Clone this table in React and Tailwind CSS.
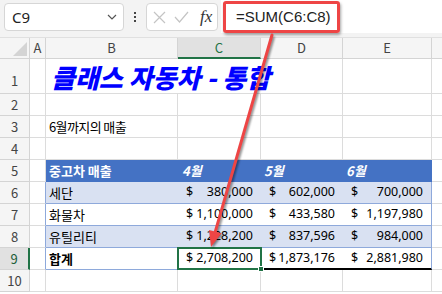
import React from "react";

const grid = "border-r border-b border-[#dcdcdc]";

const RowHead = ({ n, h, active }) => (
  <div
    className={`w-[30px] shrink-0 flex items-center justify-center text-[13px] ${h} ${
      active
        ? "bg-[#e1e1e1] text-[#1e5e3a] border-r-2 border-r-[#217346] border-b border-b-[#d4d4d4]"
        : "bg-[#f5f5f5] text-[#444] border-r border-b border-[#d4d4d4]"
    }`}
  >
    {n}
  </div>
);

const Money = ({ value, className }) => (
  <div className={`flex items-center justify-between px-[8px] text-[12.5px] font-['Noto_Sans',sans-serif] ${className}`}>
    <span>$</span>
    <span>{value}</span>
  </div>
);

const data = [
  { n: 6, label: "세단", c: "380,000", d: "602,000", e: "700,000", bg: "bg-[#d9e1f2]" },
  { n: 7, label: "화물차", c: "1,100,000", d: "433,580", e: "1,197,980", bg: "bg-white" },
  { n: 8, label: "유틸리티", c: "1,228,200", d: "837,596", e: "984,000", bg: "bg-[#d9e1f2]" },
];

const App = () => {
  return (
    <div className="w-[442px] h-[294px] overflow-hidden relative bg-white text-black font-['Noto_Sans_CJK_KR',sans-serif]">
      {/* formula bar */}
      <div className="h-[38px] flex bg-[#f3f3f3] border-b border-[#e0e0e0]">
        <div className="ml-[4px] mt-[3px] w-[120px] h-[28px] bg-white border border-[#d6d6d6] rounded-[4px] flex items-center justify-between pl-[7px] pr-[6px]">
          <span className="text-[15px] text-[#222] font-['Noto_Sans',sans-serif]">C9</span>
          <svg width="10" height="6" viewBox="0 0 10 6">
            <path d="M1 1 L5 5 L9 1" fill="none" stroke="#555" strokeWidth="1.2" />
          </svg>
        </div>
        <div className="w-[22px] flex flex-col items-center justify-center gap-[2px] pb-[4px]">
          <span className="w-[2px] h-[2px] bg-[#444]" />
          <span className="w-[2px] h-[2px] bg-[#444]" />
          <span className="w-[2px] h-[2px] bg-[#444]" />
        </div>
        <div className="mt-[3px] w-[72px] h-[28px] bg-white border border-[#d6d6d6] rounded-[4px] flex items-center pl-[6px] gap-[8px]">
          <svg width="13" height="13" viewBox="0 0 13 13">
            <path d="M1 1 L12 12 M12 1 L1 12" stroke="#c4c4c4" strokeWidth="1.2" />
          </svg>
          <svg width="15" height="12" viewBox="0 0 15 12">
            <path d="M1 6 L5.5 11 L14 1" fill="none" stroke="#c4c4c4" strokeWidth="1.2" />
          </svg>
          <span className="ml-[3px] text-[17px] italic text-[#333] font-['Liberation_Serif',serif]">fx</span>
        </div>
        <div className="ml-[3px] flex-1 h-[33px] bg-white flex">
          <div className="ml-[2px] mt-[1px] w-[117px] h-[32px] border-[3px] border-[#ee4545] rounded-[3px] shadow-[1px_2px_3px_rgba(0,0,0,0.35)] flex items-center pl-[10px] text-[15px] text-[#222] font-['Liberation_Sans',sans-serif]">
            =SUM(C6:C8)
          </div>
        </div>
      </div>

      {/* column headers */}
      <div className="flex h-[21px] text-[13px] text-[#444] bg-[#f5f5f5]">
        <div className="w-[30px] shrink-0 border-r border-b border-[#d4d4d4] relative">
          <svg className="absolute right-[2px] bottom-[2px]" width="14" height="14" viewBox="0 0 14 14">
            <path d="M14 0 L14 14 L0 14 Z" fill="#d4d4d4" />
          </svg>
        </div>
        <div className="w-[16px] shrink-0 flex items-center justify-center border-r border-b border-[#d4d4d4]">A</div>
        <div className="w-[132px] shrink-0 flex items-center justify-center border-r border-b border-[#d4d4d4]">B</div>
        <div className="w-[83px] shrink-0 flex items-center justify-center bg-[#e1e1e1] text-[#217346] border-r border-r-[#d4d4d4] border-b-2 border-b-[#217346]">C</div>
        <div className="w-[82px] shrink-0 flex items-center justify-center border-r border-b border-[#d4d4d4]">D</div>
        <div className="w-[89px] shrink-0 flex items-center justify-center border-r border-b border-[#d4d4d4]">E</div>
        <div className="flex-1 border-b border-[#d4d4d4]" />
      </div>

      {/* row 1 */}
      <div className="flex h-[35px]">
        <RowHead n={1} h="h-[35px] pt-[10px]" />
        <div className={`w-[16px] shrink-0 ${grid}`} />
        <div className="w-[132px] shrink-0 border-b border-[#dcdcdc] relative">
          <span className="absolute left-[5px] bottom-[0px] whitespace-nowrap text-[26px] font-black italic text-[#0000ff] leading-[32px]">
            클래스 자동차 - 통합
          </span>
        </div>
        <div className="w-[83px] shrink-0 border-b border-[#dcdcdc]" />
        <div className={`w-[82px] shrink-0 ${grid}`} />
        <div className={`w-[89px] shrink-0 ${grid}`} />
        <div className="flex-1 border-b border-[#dcdcdc]" />
      </div>

      {/* rows 2-4 */}
      {[2, 3, 4].map((n) => (
        <div key={n} className="flex h-[22px]">
          <RowHead n={n} h="h-[22px]" />
          <div className={`w-[16px] shrink-0 ${grid}`} />
          <div className={`w-[132px] shrink-0 flex items-center pl-[3px] text-[13px] tracking-[-0.6px] ${grid}`}>
            {n === 3 ? "6월까지의 매출" : ""}
          </div>
          <div className={`w-[83px] shrink-0 ${grid}`} />
          <div className={`w-[82px] shrink-0 ${grid}`} />
          <div className={`w-[89px] shrink-0 ${grid}`} />
          <div className="flex-1 border-b border-[#dcdcdc]" />
        </div>
      ))}

      {/* row 5 header */}
      <div className="flex h-[22px]">
        <RowHead n={5} h="h-[22px]" />
        <div className={`w-[16px] shrink-0 ${grid}`} />
        <div className="w-[132px] shrink-0 bg-[#4472c4] text-white font-bold text-[13px] flex items-center pl-[3px]">중고차 매출</div>
        <div className="w-[83px] shrink-0 bg-[#4472c4] text-white font-bold italic text-[13px] flex items-center pl-[4px]">4월</div>
        <div className="w-[82px] shrink-0 bg-[#4472c4] text-white font-bold italic text-[13px] flex items-center pl-[3px]">5월</div>
        <div className="w-[89px] shrink-0 bg-[#4472c4] text-white font-bold italic text-[13px] flex items-center pl-[3px]">6월</div>
        <div className="flex-1 border-b border-[#dcdcdc]" />
      </div>

      {/* rows 6-8 */}
      {data.map((r) => (
        <div key={r.n} className="flex h-[22px]">
          <RowHead n={r.n} h="h-[22px]" />
          <div className="w-[16px] shrink-0 border-b border-[#dcdcdc] border-r border-r-[#8ea9db]" />
          <div className={`w-[132px] shrink-0 flex items-center pl-[3px] text-[13px] border-b border-[#8ea9db] ${r.bg}`}>{r.label}</div>
          <Money value={r.c} className={`w-[83px] shrink-0 border-b border-[#8ea9db] ${r.bg}`} />
          <Money value={r.d} className={`w-[82px] shrink-0 border-b border-[#8ea9db] ${r.bg}`} />
          <Money value={r.e} className={`w-[89px] shrink-0 border-b border-r border-[#8ea9db] ${r.bg}`} />
          <div className="flex-1 border-b border-[#dcdcdc]" />
        </div>
      ))}

      {/* row 9 total */}
      <div className="flex h-[22px]">
        <RowHead n={9} h="h-[22px]" active />
        <div className="w-[16px] shrink-0 border-b border-[#dcdcdc] border-r border-r-[#8ea9db]" />
        <div className="w-[132px] shrink-0 flex items-center pl-[3px] text-[13px] font-bold border-b border-[#8ea9db]">합계</div>
        <div className="w-[83px] shrink-0 relative border-b-2 border-black">
          <Money value="2,708,200" className="h-full" />
          <div className="absolute -left-[1px] -top-[1px] -right-[1px] -bottom-[2px] border-2 border-[#217346]" />
          <div className="absolute -right-[3px] -bottom-[4px] w-[6px] h-[6px] bg-[#217346] border border-white" />
        </div>
        <Money value="1,873,176" className="w-[82px] shrink-0 border-b-2 border-black" />
        <Money value="2,881,980" className="w-[89px] shrink-0 border-b-2 border-black border-r border-r-[#8ea9db]" />
        <div className="flex-1 border-b border-[#dcdcdc]" />
      </div>

      {/* row 10 */}
      <div className="flex h-[22px]">
        <RowHead n={10} h="h-[22px]" />
        <div className={`w-[16px] shrink-0 ${grid}`} />
        <div className={`w-[132px] shrink-0 ${grid}`} />
        <div className={`w-[83px] shrink-0 ${grid}`} />
        <div className={`w-[82px] shrink-0 ${grid}`} />
        <div className={`w-[89px] shrink-0 ${grid}`} />
        <div className="flex-1 border-b border-[#dcdcdc]" />
      </div>

      {/* arrow annotation */}
      <svg className="absolute left-0 top-0 pointer-events-none" width="442" height="294" viewBox="0 0 442 294">
        <defs>
          <filter id="sh" x="-20%" y="-20%" width="140%" height="140%">
            <feGaussianBlur stdDeviation="1.2" />
          </filter>
        </defs>
        <g transform="translate(1.5 1.5)" filter="url(#sh)" opacity="0.45">
          <line x1="272" y1="35" x2="215.3" y2="231.6" stroke="#000" strokeWidth="3" />
          <polygon points="211,247 221.6,233.3 209,229.9" fill="#000" />
        </g>
        <line x1="272" y1="35" x2="215.3" y2="231.6" stroke="#ee4545" strokeWidth="3" strokeLinecap="round" />
        <polygon points="211,247 221.6,233.3 209,229.9" fill="#ee4545" />
      </svg>
    </div>
  );
};

export default App;
